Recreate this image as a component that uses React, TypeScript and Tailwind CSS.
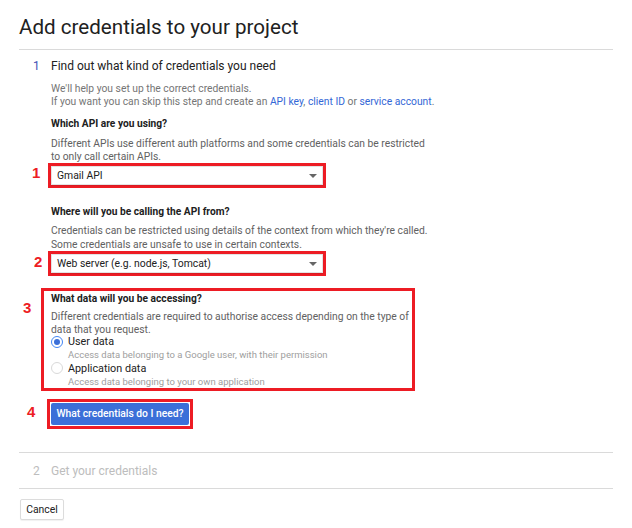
import React, { useState } from 'react';

const RED = 'border-[#ed1c24]';
const LABEL = "absolute font-['Liberation_Sans',_sans-serif] text-[15px] font-bold leading-none text-[#ed1c24]";

const Select = ({ value }: { value: string }) => (
  <div className="flex h-[19px] items-center justify-between border border-[#e3e3e3] bg-white pl-[5px] pr-[5px] text-[10.4px] text-[#212121] shadow-[0_1px_1px_rgba(0,0,0,0.08)]">
    <span>{value}</span>
    <span className="h-0 w-0 border-x-[4px] border-t-[4px] border-x-transparent border-t-[#666666]" />
  </div>
);

const Radio = ({ checked }: { checked: boolean }) => (
  <span
    className={`flex h-[12px] w-[12px] items-center justify-center rounded-full border ${
      checked ? 'border-[#4285f4]' : 'border-[#d9d9d9]'
    }`}
  >
    {checked && <span className="h-[6px] w-[6px] rounded-full bg-[#3b6fd8]" />}
  </span>
);

export default function App() {
  const [data, setData] = useState<'user' | 'app'>('user');

  return (
    <div className="min-h-[528px] bg-white px-[19px] pt-[13px] font-['Roboto',_'Liberation_Sans',_sans-serif] text-[#212121]">
      <h1 className="text-[20.6px] leading-[28px] text-[#212121]">Add credentials to your project</h1>
      <div className="mt-[8px] border-t border-[#dadada]" />

      {/* step 1 */}
      <div className="flex pt-[7px]">
        <div className="w-[32px] pl-[14px] text-[12px] leading-[18px] text-[#3f51b5]">1</div>
        <div className="flex-1">
          <div className="text-[12px] leading-[18px] text-[#212121]">Find out what kind of credentials you need</div>

          <div className="mt-[7px] text-[10.3px] leading-[13px] text-[#757575]">
            <div>We'll help you set up the correct credentials.</div>
            <div>
              If you want you can skip this step and create an{' '}
              <span className="text-[#3367d6]">API key</span>,{' '}
              <span className="text-[#3367d6]">client ID</span> or{' '}
              <span className="text-[#3367d6]">service account</span>.
            </div>
          </div>

          <div className="mt-[9px] text-[10.2px] font-bold leading-[14px] text-[#212121]">Which API are you using?</div>
          <div className="mt-[6px] whitespace-nowrap text-[10.3px] leading-[13px] text-[#616161]">
            Different APIs use different auth platforms and some credentials can be restricted
            <br />
            to only call certain APIs.
          </div>
          <div className={`relative -ml-[3px] w-[278px] border-[3px] ${RED}`}>
            <span className={`${LABEL} -left-[19px] top-[-1px]`}>1</span>
            <Select value="Gmail API" />
          </div>

          <div className="mt-[17px] text-[10.2px] font-bold leading-[14px] text-[#212121]">Where will you be calling the API from?</div>
          <div className="mt-[5px] whitespace-nowrap text-[10.3px] leading-[13.5px] text-[#616161]">
            Credentials can be restricted using details of the context from which they're called.
            <br />
            Some credentials are unsafe to use in certain contexts.
          </div>
          <div className={`relative -ml-[3px] w-[278px] border-[3px] ${RED}`}>
            <span className={`${LABEL} -left-[17px] top-[0px]`}>2</span>
            <Select value="Web server (e.g. node.js, Tomcat)" />
          </div>

          <div className={`relative -ml-[10px] mt-[12px] w-[374px] border-[3px] ${RED} pl-[7px] pt-[1px]`}>
            <span className={`${LABEL} -left-[21px] top-[9px]`}>3</span>
            <div className="text-[10.2px] font-bold leading-[14px] text-[#212121]">What data will you be accessing?</div>
            <div className="mt-[5px] whitespace-nowrap text-[10.3px] leading-[12.5px] text-[#616161]">
              Different credentials are required to authorise access depending on the type of
              <br />
              data that you request.
            </div>
            <div>
              <label className="flex cursor-pointer items-start gap-[5px]" onClick={() => setData('user')}>
                <Radio checked={data === 'user'} />
                <span>
                  <div className="text-[10.8px] leading-[12px] text-[#212121]">User data</div>
                  <div className="text-[9.5px] leading-[14px] text-[#9e9e9e]">Access data belonging to a Google user, with their permission</div>
                </span>
              </label>
              <label className="flex cursor-pointer items-start gap-[5px]" onClick={() => setData('app')}>
                <Radio checked={data === 'app'} />
                <span>
                  <div className="text-[10.8px] leading-[13px] text-[#212121]">Application data</div>
                  <div className="text-[9.5px] leading-[13px] text-[#9e9e9e]">Access data belonging to your own application</div>
                </span>
              </label>
            </div>
          </div>

          <div className={`relative -ml-[4px] mt-[8px] inline-block border-[3px] ${RED} p-[1px]`}>
            <span className={`${LABEL} -left-[23px] top-[2px]`}>4</span>
            <button className="block h-[22px] w-[138px] rounded-[2px] bg-[#3b6fd8] text-[10.3px] font-medium text-white">
              What credentials do I need?
            </button>
          </div>
        </div>
      </div>

      <div className="mt-[23px] border-t border-[#dadada]" />
      <div className="flex h-[35px] items-center">
        <div className="w-[32px] pl-[14px] text-[12px] text-[#bdbdbd]">2</div>
        <div className="text-[12px] text-[#bdbdbd]">Get your credentials</div>
      </div>
      <div className="border-t border-[#dadada]" />

      <button className="ml-[1px] mt-[10px] h-[21px] w-[44px] rounded-[2px] border border-[#dcdcdc] bg-white text-[10.4px] text-[#212121] shadow-[0_1px_1px_rgba(0,0,0,0.06)]">
        Cancel
      </button>
    </div>
  );
}
